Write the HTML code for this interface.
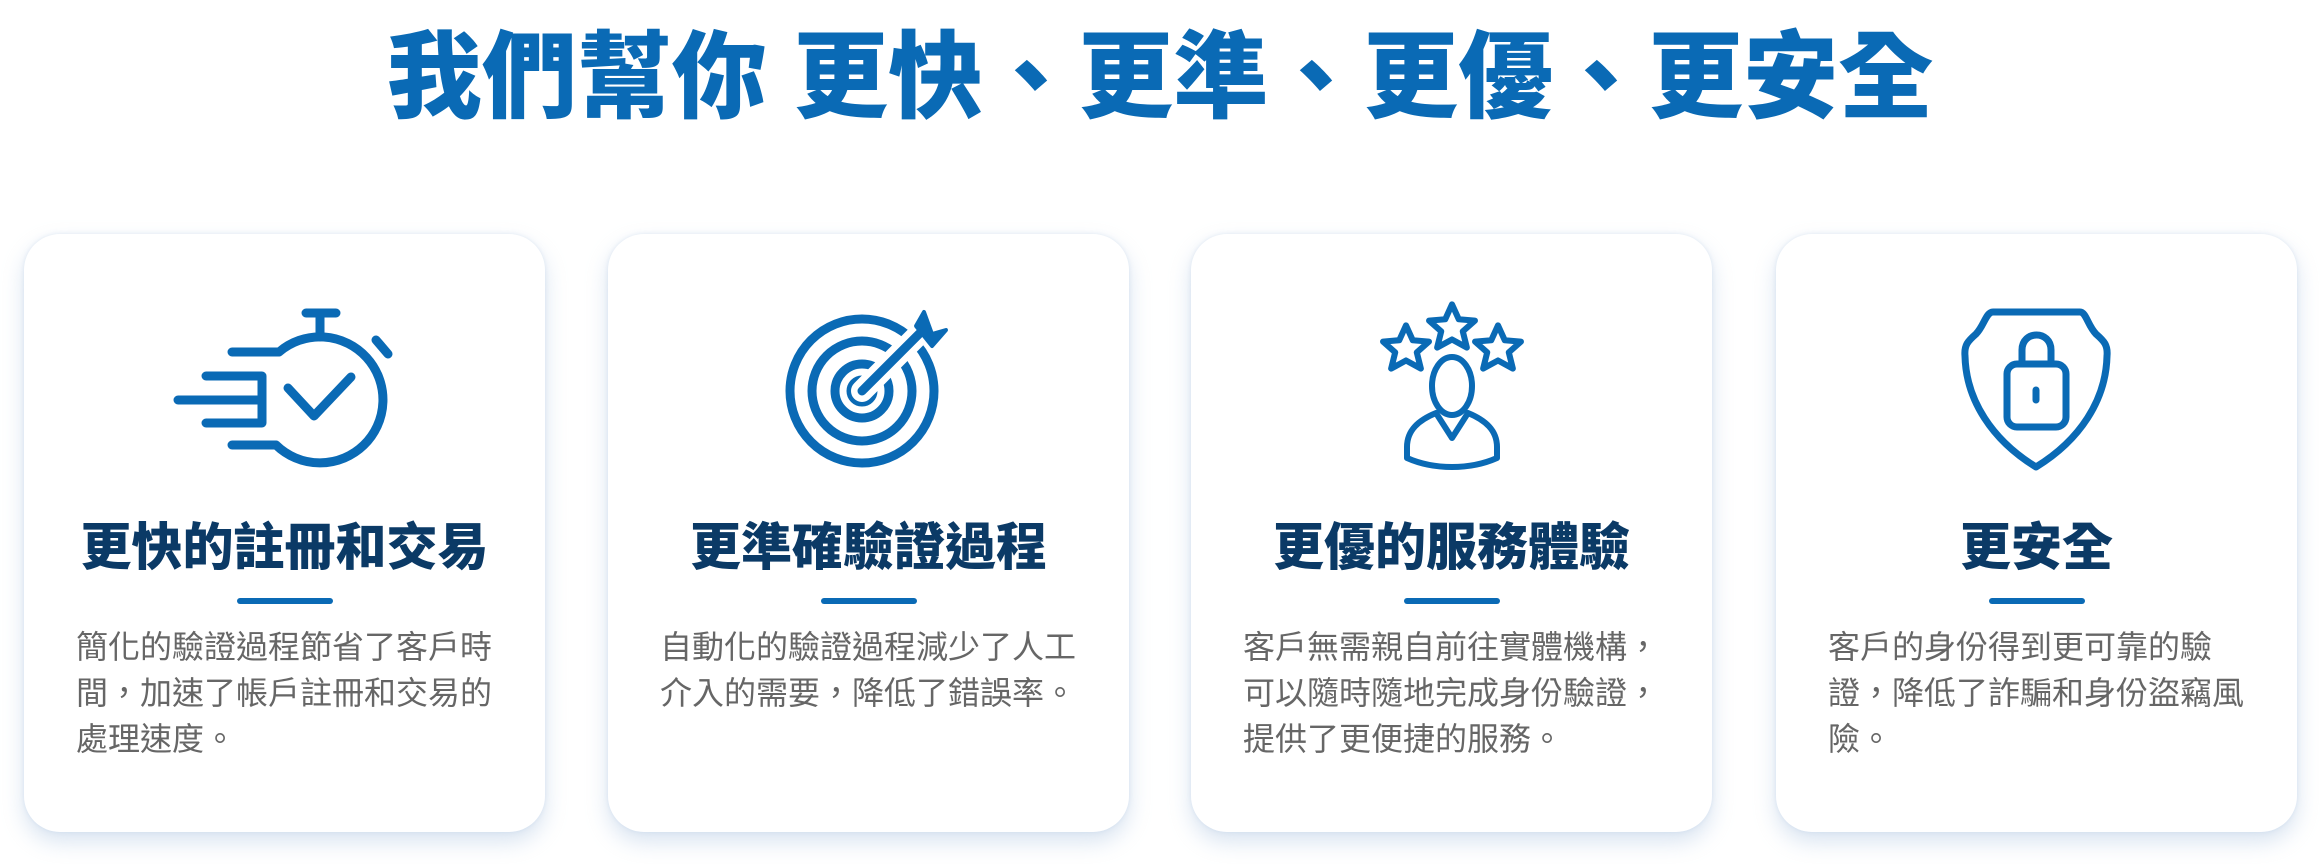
<!DOCTYPE html>
<html><head><meta charset="utf-8"><style>
*{margin:0;padding:0;box-sizing:border-box}
body{width:2320px;height:864px;background:#fff;position:relative;overflow:hidden;font-family:"Liberation Sans","Noto Sans CJK TC",sans-serif}
h1{position:absolute;top:16px;left:0;width:2320px;text-align:center;font-size:95px;line-height:124px;font-weight:900;color:#0a6ab5;white-space:nowrap}
.card{position:absolute;top:234px;width:521px;height:598px;background:#fff;border-radius:36px;box-shadow:0 10px 22px rgba(170,195,225,.45),0 0 4px rgba(200,215,235,.5)}
.card h2{position:absolute;top:282px;left:0;width:100%;text-align:center;font-size:51px;line-height:64px;font-weight:900;color:#0b3a66;white-space:nowrap}
.bar{position:absolute;top:364px;left:50%;margin-left:-48px;width:96px;height:6px;border-radius:3px;background:#0a6ab5}
.card p{position:absolute;top:390px;left:52px;width:420px;font-size:32px;line-height:46px;color:#666}
svg{position:absolute;left:0;top:0}
</style></head><body>
<h1>我們幫你 更快、更準、更優、更安全</h1>
<div class="card" style="left:24px"><h2>更快的註冊和交易</h2><div class="bar"></div><p>簡化的驗證過程節省了客戶時間，加速了帳戶註冊和交易的處理速度。</p></div>
<div class="card" style="left:608px"><h2>更準確驗證過程</h2><div class="bar"></div><p>自動化的驗證過程減少了人工介入的需要，降低了錯誤率。</p></div>
<div class="card" style="left:1191px"><h2>更優的服務體驗</h2><div class="bar"></div><p>客戶無需親自前往實體機構，可以隨時隨地完成身份驗證，提供了更便捷的服務。</p></div>
<div class="card" style="left:1776px"><h2>更安全</h2><div class="bar"></div><p>客戶的身份得到更可靠的驗證，降低了詐騙和身份盜竊風險。</p></div>
<svg width="2320" height="864" fill="none" stroke="#0a6ab5" stroke-width="9" stroke-linecap="round" stroke-linejoin="round">
<path d="M279,352 A63,63 0 1 1 276,445"/>
<path d="M232,352H279M206,376H262M178,400H262M206,423H262M232,445H276M262,376V423"/>
<path d="M320,313V337M306,313H336M376,340L388,354"/>
<path d="M288,388L314,416L351,377"/>
<circle cx="862" cy="391" r="72"/>
<circle cx="862" cy="391" r="50"/>
<circle cx="862" cy="391" r="27"/>
<circle cx="862" cy="391" r="11" fill="#0a6ab5"/>
<path d="M862,391L922,331" stroke="#fff" stroke-width="22"/>
<path d="M862,391L922,331" stroke-width="9"/>
<path d="M916,326L924,312L932,334L946,330L932,346Z" fill="#0a6ab5" stroke-width="4"/>
<g stroke-width="6">
<g transform="translate(1406,347) scale(1.35) translate(-1406,-347)"><path d="M1406,331l5,11 12,1 -9,8 3,12 -11,-6 -11,6 3,-12 -9,-8 12,-1z" stroke-width="4.5"/></g>
<g transform="translate(1452,326) scale(1.35) translate(-1452,-326)"><path d="M1452,310l5,11 12,1 -9,8 3,12 -11,-6 -11,6 3,-12 -9,-8 12,-1z" stroke-width="4.5"/></g>
<g transform="translate(1498,347) scale(1.35) translate(-1498,-347)"><path d="M1498,331l5,11 12,1 -9,8 3,12 -11,-6 -11,6 3,-12 -9,-8 12,-1z" stroke-width="4.5"/></g>
<ellipse cx="1452" cy="386" rx="20" ry="29"/>
<path d="M1436,413L1452,438L1468,413C1485,420 1497,430 1497,447V458C1470,470 1434,470 1407,458V447C1407,430 1419,420 1436,413Z"/>
</g>
<g stroke-width="7">
<path d="M1993,312H2080C2086,312 2088,326 2096,334C2104,341 2108,345 2107,356C2106,400 2080,440 2036,467C1992,440 1966,400 1965,356C1964,345 1968,341 1976,334C1984,326 1986,312 1993,312Z"/>
<rect x="2007" y="364" width="59" height="63" rx="10"/>
<path d="M2022,364V350C2022,330 2051,330 2051,350V364"/>
<path d="M2036,390V400"/>
</g>
</svg>
</body></html>
